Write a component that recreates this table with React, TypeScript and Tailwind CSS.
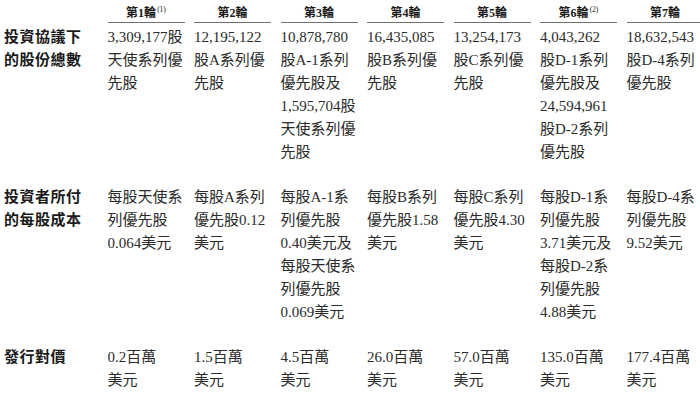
import React from "react";

const heads: { t: string; sup?: string }[] = [
  { t: "第1輪", sup: "(1)" },
  { t: "第2輪" },
  { t: "第3輪" },
  { t: "第4輪" },
  { t: "第5輪" },
  { t: "第6輪", sup: "(2)" },
  { t: "第7輪" },
];

const rows: { label: string[]; cells: string[][] }[] = [
  {
    label: ["投資協議下", "的股份總數"],
    cells: [
      ["3,309,177股", "天使系列優", "先股"],
      ["12,195,122", "股A系列優", "先股"],
      ["10,878,780", "股A-1系列", "優先股及", "1,595,704股", "天使系列優", "先股"],
      ["16,435,085", "股B系列優", "先股"],
      ["13,254,173", "股C系列優", "先股"],
      ["4,043,262", "股D-1系列", "優先股及", "24,594,961", "股D-2系列", "優先股"],
      ["18,632,543", "股D-4系列", "優先股"],
    ],
  },
  {
    label: ["投資者所付", "的每股成本"],
    cells: [
      ["每股天使系", "列優先股", "0.064美元"],
      ["每股A系列", "優先股0.12", "美元"],
      ["每股A-1系", "列優先股", "0.40美元及", "每股天使系", "列優先股", "0.069美元"],
      ["每股B系列", "優先股1.58", "美元"],
      ["每股C系列", "優先股4.30", "美元"],
      ["每股D-1系", "列優先股", "3.71美元及", "每股D-2系", "列優先股", "4.88美元"],
      ["每股D-4系", "列優先股", "9.52美元"],
    ],
  },
  {
    label: ["發行對價"],
    cells: [
      ["0.2百萬", "美元"],
      ["1.5百萬", "美元"],
      ["4.5百萬", "美元"],
      ["26.0百萬", "美元"],
      ["57.0百萬", "美元"],
      ["135.0百萬", "美元"],
      ["177.4百萬", "美元"],
    ],
  },
];

export default function App() {
  return (
    <div
      className="w-[700px] h-[403px] bg-white text-[#2b2b2b] overflow-hidden"
      style={{ fontFamily: '"Liberation Serif", "Noto Sans CJK TC", serif' }}
    >
      <div className="grid grid-cols-[94px_repeat(7,77px)] gap-x-[9.5px] pl-[4px]">
        <div />
        {heads.map((h, i) => (
          <div
            key={i}
            className="h-[23px] border-b border-[#6f6f6f] flex justify-center pt-[5.5px] text-[12px] leading-[15px] font-bold whitespace-nowrap text-[#1a1a1a]"
          >
            <span className="flex items-start">
              <span>{h.t}</span>
              {h.sup && (
                <span className="text-[7.5px] leading-[8px] font-normal ml-[1px] mt-[0px]">{h.sup}</span>
              )}
            </span>
          </div>
        ))}
        {rows.map((r, ri) => (
          <React.Fragment key={ri}>
            <div
              className={`${ri === 0 ? "mt-[2.5px]" : "mt-[22px]"} text-[15px] leading-[23px] font-bold tracking-[0.5px] text-[#1a1a1a]`}
            >
              {r.label.map((l, li) => (
                <div key={li} className="whitespace-nowrap">{l}</div>
              ))}
            </div>
            {r.cells.map((c, ci) => (
              <div
                key={ci}
                className={`${ri === 0 ? "mt-[2.5px]" : "mt-[22px]"} text-[15px] leading-[23px]`}
              >
                {c.map((l, li) => (
                  <div key={li} className="whitespace-nowrap">{l}</div>
                ))}
              </div>
            ))}
          </React.Fragment>
        ))}
      </div>
    </div>
  );
}
